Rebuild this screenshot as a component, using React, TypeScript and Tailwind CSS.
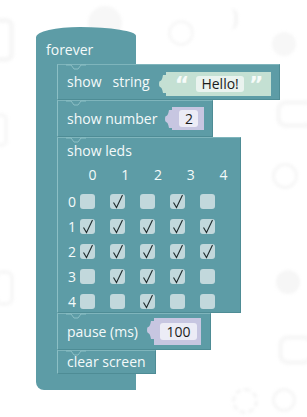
import React from "react";

const FONT = { fontFamily: '"Open Sans", "Noto Sans", sans-serif' };

const LEDS: number[][] = [
  [0, 1, 0, 1, 0],
  [1, 1, 1, 1, 1],
  [1, 1, 1, 1, 1],
  [0, 1, 1, 1, 0],
  [0, 0, 1, 0, 0],
];

function Notch() {
  return (
    <svg className="absolute left-[8px] top-[-1px]" width="20" height="7" viewBox="0 0 20 7">
      <path d="M0 1 L5 1 L8 5 L12 5 L15 1 L20 1" fill="#5d9ca6" stroke="#8cbfc5" strokeWidth="1" />
    </svg>
  );
}

function Tab({ color }: { color: string }) {
  return (
    <svg className="absolute left-[-7px] top-[3px]" width="8" height="18" viewBox="0 0 8 18">
      <path d="M8 0 L8 18 L4 18 Q3 12 1 12 Q0 12 0 9 Q0 6 1 6 Q3 6 4 0 Z" fill={color} />
    </svg>
  );
}

function Check() {
  return (
    <svg width="15" height="15" viewBox="0 0 15 15" className="overflow-visible">
      <path d="M3.5 8.5 L6.5 13.5 L12.5 1" fill="none" stroke="#1f2a2c" strokeWidth="1.1" />
    </svg>
  );
}

function Block({ children, className }: { children: React.ReactNode; className: string }) {
  return (
    <div
      className={
        "relative bg-[#5d9ca6] border border-[#4e8c95] border-l-[#8cbfc5] border-t-[#7fb5bc] " + className
      }
    >
      <Notch />
      {children}
    </div>
  );
}

export default function App() {
  return (
    <div className="relative w-[307px] h-[417px] bg-white overflow-hidden text-[#f4fafa]" style={FONT}>
      {/* faint background decoration */}
      <div className="absolute inset-0 blur-[1.5px]">
        <div className="absolute left-[-8px] top-[18px] w-[22px] h-[44px] rounded-[8px] border-[5px] border-[#f6f6f6]" />
        <div className="absolute left-[88px] top-[6px] w-[34px] h-[34px] rounded-full bg-[#f7f7f7]" />
        <div className="absolute left-[168px] top-[20px] w-[26px] h-[26px] rounded-full border-[3px] border-[#f7f7f7]" />
        <div className="absolute left-[222px] top-[8px] w-[16px] h-[22px] rounded-full border-r-[4px] border-[#f5f5f5]" />
        <div className="absolute left-[272px] top-[32px] w-[24px] h-[24px] rounded-full bg-[#f7f7f7]" />
        <div className="absolute left-[276px] top-[100px] w-[40px] h-[28px] rounded-[10px] border-[5px] border-[#f7f7f7]" />
        <div className="absolute left-[272px] top-[163px] w-[26px] h-[26px] rounded-full border-[3px] border-[#f6f6f6]" />
        <div className="absolute left-[-10px] top-[113px] w-[18px] h-[34px] rounded-[6px] border-[4px] border-[#f8f8f8]" />
        <div className="absolute left-[-6px] top-[270px] w-[20px] h-[36px] rounded-[8px] border-[4px] border-[#f7f7f7]" />
        <div className="absolute left-[276px] top-[270px] w-[24px] h-[24px] rounded-full bg-[#f6f6f6]" />
        <div className="absolute left-[278px] top-[335px] w-[36px] h-[30px] rounded-[10px] border-[5px] border-[#f7f7f7]" />
        <div className="absolute left-[232px] top-[388px] w-[26px] h-[26px] rounded-full border-[3px] border-dashed border-[#f5f5f5]" />
        <div className="absolute left-[272px] top-[388px] w-[24px] h-[24px] rounded-full border-[3px] border-[#f6f6f6]" />
      </div>

      {/* forever block */}
      <div className="relative ml-[36px] pt-[27px] flex flex-col w-max">
        <div className="w-[100px] h-[37px] bg-[#5d9ca6] rounded-tl-[44px_10px] rounded-tr-[56px_9px] pl-[10px] pt-[14px] text-[14px] leading-[18px]">
          forever
        </div>
        <div className="flex">
          <div className="w-[21px] bg-[#5d9ca6]" />
          <div className="flex flex-col">
            {/* show string */}
            <Block className="w-[223px] h-[36px] flex items-center">
              <span className="ml-[9px] text-[14px] leading-[18px]">show</span>
              <span className="ml-[11px] text-[14px] leading-[18px]">string</span>
              <div className="relative ml-[16px] w-[105px] h-[24px] mt-[3px] bg-[#c4e0d3] flex items-center">
                <Tab color="#c4e0d3" />
                <span className="ml-[9px] mt-[2px] text-[22px] font-bold text-[#f6fbf9] leading-none self-start" style={{ fontFamily: '"DejaVu Sans", sans-serif' }}>“</span>
                <div className="ml-[7px] w-[48px] h-[16px] bg-[#eaf3ef] rounded-[3px] text-[#1c1c1c] text-[14px] leading-[16px] text-center">
                  Hello!
                </div>
                <span className="ml-[5px] mt-[2px] text-[22px] font-bold text-[#f6fbf9] leading-none self-start" style={{ fontFamily: '"DejaVu Sans", sans-serif' }}>”</span>
              </div>
            </Block>
            {/* show number */}
            <Block className="w-[156px] h-[37px] flex items-center">
              <span className="ml-[9px] text-[14px] leading-[18px]">show number</span>
              <div className="relative ml-[15px] w-[32px] h-[23px] bg-[#c7c6e1] flex items-center">
                <Tab color="#c7c6e1" />
                <div className="ml-[7px] w-[19px] h-[17px] bg-[#ececf6] rounded-[3px] text-[#1c1c1c] text-[14px] leading-[17px] text-center">
                  2
                </div>
              </div>
            </Block>
            {/* show leds */}
            <Block className="w-[184px] h-[176px] flex flex-col">
              <div className="ml-[9px] mt-[4px] text-[14px] leading-[18px]">show leds</div>
              <div className="flex mt-[6px] ml-[18px] text-[14px] leading-[18px]">
                {[0, 1, 2, 3, 4].map((c) => (
                  <div key={c} className="w-[34px] text-center">
                    {c}
                  </div>
                ))}
              </div>
              <div className="flex flex-col gap-[10px] mt-[10px]">
                {LEDS.map((row, r) => (
                  <div key={r} className="flex items-center h-[15px]">
                    <span className="ml-[10px] w-[12px] text-[14px] leading-[15px]">{r}</span>
                    <div className="flex gap-[15px]">
                      {row.map((v, c) => (
                        <div key={c} className="w-[15px] h-[15px] rounded-[3px] bg-[#c2d8dc]">
                          {v ? <Check /> : null}
                        </div>
                      ))}
                    </div>
                  </div>
                ))}
              </div>
            </Block>
            {/* pause */}
            <Block className="w-[154px] h-[37px] flex items-center">
              <span className="ml-[9px] text-[14px] leading-[18px]">pause (ms)</span>
              <div className="relative ml-[16px] w-[47px] h-[27px] bg-[#c7c6e1] flex items-center">
                <Tab color="#c7c6e1" />
                <div className="ml-[6px] w-[37px] h-[17px] bg-[#ececf6] rounded-[3px] text-[#1c1c1c] text-[14px] leading-[17px] text-center">
                  100
                </div>
              </div>
            </Block>
            {/* clear screen */}
            <Block className="w-[99px] h-[24px] flex items-center">
              <span className="ml-[9px] text-[14px] leading-[18px]">clear screen</span>
            </Block>
          </div>
        </div>
        <div className="w-[100px] h-[16px] bg-[#5d9ca6] rounded-bl-[8px]" />
      </div>
    </div>
  );
}
